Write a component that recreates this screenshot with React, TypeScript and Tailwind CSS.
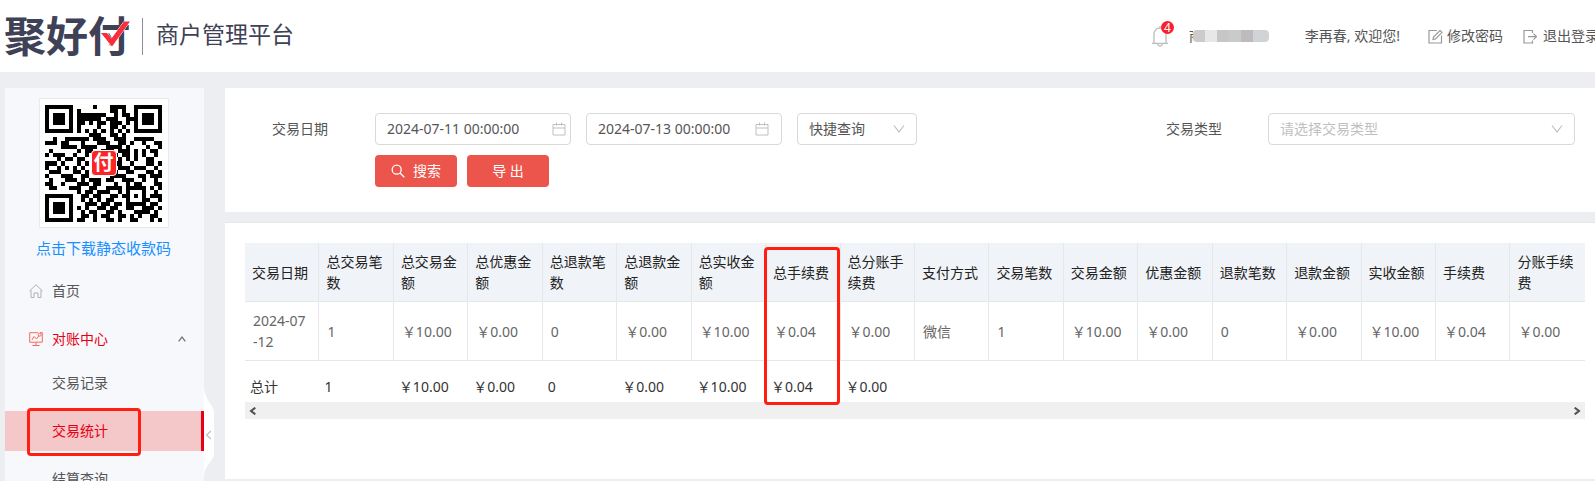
import { useState } from 'react';

const QR_ROWS = [
    '11111110000010001111001111111',
    '10000010100000001101001000001',
    '10111010111111100101101011101',
    '10111010111111011100111011101',
    '10111010110101101110101011101',
    '10000010100001001101001000001',
    '11111110101010101010101111111',
    '00000000000111001101000000000',
    '00100111111011100111001111100',
    '11101100010001110011010010011',
    '00001111011110011110100001001',
    '01000000101100111011101010110',
    '10111001001000001101101010010',
    '00010110110000000010101001100',
    '11101000101000000110010001101',
    '10010101010000000011101110010',
    '01110001101000000100110001101',
    '10001110011000001111000110111',
    '01000111010111011001110010010',
    '11001000111011000100101100011',
    '01100011100110011110111110101',
    '00000000101101110010100010010',
    '11111110011011001101101010111',
    '10000010010101011000100011001',
    '10111010001110110110111110110',
    '10111010101001101100110011101',
    '10111010010110011010001111010',
    '10000010011010110011010100110',
    '11111110110010011010011000101',
];

// full-width yen sign
const yuan = (amount: string) => `\uFFE5${amount}`;

const COLUMNS = [
    { title: '交易日期', value: '2024-07\n-12', total: '总计' },
    { title: '总交易笔数', value: '1', total: '1' },
    { title: '总交易金额', value: yuan('10.00'), total: yuan('10.00') },
    { title: '总优惠金额', value: yuan('0.00'), total: yuan('0.00') },
    { title: '总退款笔数', value: '0', total: '0' },
    { title: '总退款金额', value: yuan('0.00'), total: yuan('0.00') },
    { title: '总实收金额', value: yuan('10.00'), total: yuan('10.00') },
    { title: '总手续费', value: yuan('0.04'), total: yuan('0.04') },
    { title: '总分账手续费', value: yuan('0.00'), total: yuan('0.00') },
    { title: '支付方式', value: '微信', total: '' },
    { title: '交易笔数', value: '1', total: '' },
    { title: '交易金额', value: yuan('10.00'), total: '' },
    { title: '优惠金额', value: yuan('0.00'), total: '' },
    { title: '退款笔数', value: '0', total: '' },
    { title: '退款金额', value: yuan('0.00'), total: '' },
    { title: '实收金额', value: yuan('10.00'), total: '' },
    { title: '手续费', value: yuan('0.04'), total: '' },
    { title: '分账手续费', value: yuan('0.00'), total: '' },
];

const Chevron = ({ className }: { className: string }) => (
    <svg viewBox="0 0 12 12" className={className} fill="none" stroke="currentColor" strokeWidth="1.2">
        <path d="M1 2.5 6 9l5-6.5" />
    </svg>
);

const CalendarIcon = () => (
    <svg viewBox="0 0 14 14" className="size-3.5 shrink-0 text-[#bfbfbf]" fill="none" stroke="currentColor">
        <path d="M1 2.5h12v10.5H1zM1 6h12M4.5 .5v3M9.5 .5v3" />
    </svg>
);

const QrCode = () => (
    <svg viewBox="0 0 29 29" className="size-[117px]" shapeRendering="crispEdges" role="img" aria-label="静态收款码">
        {QR_ROWS.map((row, y) =>
            row.split('').map((cell, x) => cell === '1' && <rect key={`${x}-${y}`} x={x} y={y} width="1" height="1" />)
        )}
    </svg>
);

const Header = () => (
    <header className="flex h-[72px] shrink-0 items-center bg-white pl-1 whitespace-nowrap">
        <div className="relative text-[42px] leading-[42px] font-bold text-[#3f4156]">
            聚好付
            <svg viewBox="0 0 30 26" className="absolute right-0 top-1.5 h-[26px] w-[30px]">
                <path d="M1 12h6l4.500 5.500L24 .5h6L12 25.500z" fill="#fb2c3b" stroke="#fff" strokeWidth="1" paintOrder="stroke" />
            </svg>
        </div>
        <div className="ml-3 h-[37px] w-px bg-[#8c8d99]" />
        <h1 className="ml-[13px] pb-1 text-[23px] leading-8 text-[#3f4156]">商户管理平台</h1>
        <div className="-mr-1 ml-auto flex items-center text-[#555]">
            <button className="relative mr-5" aria-label="消息">
                <svg viewBox="0 0 18 22" className="h-[22px] w-[18px]" fill="none" stroke="#bdbdbd" strokeWidth="1.3">
                    <path d="M1 18.300h16M3 18V9.500C3 5.500 5.500 3 9 3s6 2.500 6 6.500V18M6.500 19c.4 1.500 1.300 2 2.500 2s2.100-.5 2.500-2M9 3V1" />
                </svg>
                <span className="absolute -top-1 left-2.5 size-[13px] rounded-full bg-[#fb1e2c] text-center text-xs leading-[13px] text-white">4</span>
            </button>
            <div className="mr-9 flex items-center">
                <span className="w-1 overflow-hidden">商</span>
                <span className="flex h-3 overflow-hidden rounded-sm">
                    <i className="w-3 bg-[#cccaca]" />
                    <i className="w-3 bg-[#e6e7e9]" />
                    <i className="w-3 bg-[#c8c6c5]" />
                    <i className="w-3 bg-[#c9cacb]" />
                    <i className="w-3 bg-[#bdbbbc]" />
                    <i className="w-4 bg-[#d1d4d7]" />
                </span>
            </div>
            <span className="mr-7">李再春, 欢迎您!</span>
            <a href="#password" className="mr-5 flex items-center gap-1">
                <svg viewBox="0 0 15 15" className="size-[15px]" fill="none" stroke="#999" strokeWidth="1.2">
                    <path d="M9 1.500H1v12.500h12.500V6.500M5 10.500l.5-2.500L12 1.500 14 3.300 7.500 10zM5 10.500 7.500 10" />
                </svg>
                修改密码
            </a>
            <a href="#logout" className="flex items-center gap-1.5">
                <svg viewBox="0 0 14 15" className="h-[15px] w-3.5" fill="none" stroke="#999" strokeWidth="1.2">
                    <path d="M9.500 4V1.500H1V14h8.500v-2.500M5 7.700h8M10.500 4.700l3 3-3 3" />
                </svg>
                退出登录
            </a>
        </div>
    </header>
);

const Sidebar = ({ active, onSelect }: { active: string; onSelect: (name: string) => void }) => (
    <aside className="relative ml-[5px] mt-4 w-[199px] shrink-0 bg-[#f7f8fc] text-[#555]">
        <div className="flex flex-col items-center pt-2.5 pr-0.5">
            <div className="relative flex size-[130px] items-center justify-center border border-[#e8eaee] bg-white">
                <QrCode />
                <span className="absolute flex size-[26px] items-center justify-center rounded border border-white bg-[#fb2526] text-[20px] leading-none font-bold text-white">付</span>
            </div>
            <a href="#qrcode" className="mt-2 text-[15px] leading-6 text-[#1890ff]">点击下载静态收款码</a>
        </div>
        <nav className="mt-[7px]">
            <a href="#home" className="flex h-12 items-center gap-[9px] pl-6">
                <svg viewBox="0 0 14 14" className="size-3.5" fill="none" stroke="#b0b1b5">
                    <path d="M.5 7 7 .8 13.500 7M2 6v7.500h3V9h4v4.500h3V6" />
                </svg>
                首页
            </a>
            <button className="flex h-12 w-full items-center gap-[9px] pl-6 pr-[18px] text-[#e60012]">
                <svg viewBox="0 0 14 14" className="size-3.5" fill="none" stroke="#f5695c">
                    <path d="M9 .7H.7v9.500h12.600V6M7 10.500v3M3.500 13.500h7M3 8l2-3.500L7.500 7 10 3.500M13.300 6V.7H11" />
                    <circle cx="10.700" cy="2.700" r="1.500" />
                </svg>
                对账中心
                <Chevron className="ml-auto size-2 rotate-180 stroke-2 text-[#777]" />
            </button>
            <div className="flex flex-col gap-2">
                {['交易记录', '交易统计', '结算查询'].map(name => (
                    <a
                        key={name}
                        href="#report"
                        onClick={() => onSelect(name)}
                        className={`relative flex h-10 items-center pl-[47px] ${active === name ? 'border-r-3 border-[#e60012] bg-[#f4c7c9] text-[#e60012]' : ''}`}
                    >
                        {name}
                        {name === '交易统计' && <span className="absolute -top-[3px] left-[22px] h-12 w-[114px] rounded-sm border-3 border-[#ff1e10]" />}
                    </a>
                ))}
            </div>
        </nav>
        <button className="absolute left-full top-[300px] h-[88px] w-2.5" aria-label="收起菜单">
            <svg viewBox="0 0 10 88" className="h-[88px] w-2.5">
                <path d="M0 0C2 14 9 16 10 24v42c-1 8-8 9-10 22z" fill="#fff" />
                <path d="M7 43 2.500 47 7 51" fill="none" stroke="#b8c0cc" strokeWidth="1.200" />
            </svg>
        </button>
    </aside>
);

const DateField = ({ label, value, className }: { label: string; value: string; className: string }) => (
    <div className={`flex h-8 w-[196px] items-center rounded border border-[#d9d9d9] pl-[11px] ${className}`}>
        <input type="text" aria-label={label} defaultValue={value} className="w-full min-w-0 outline-none" />
        <CalendarIcon />
    </div>
);

const SearchForm = () => (
    <form className="flex h-[124px] shrink-0 bg-white pl-[47px] pr-5 pt-[25px] text-[#555]" onSubmit={e => e.preventDefault()}>
        <span className="w-[103px] shrink-0 leading-8">交易日期</span>
        <div className="flex flex-col gap-2.5">
            <div className="flex gap-[15px]">
                <DateField label="开始时间" value="2024-07-11 00:00:00" className="pr-1" />
                <DateField label="结束时间" value="2024-07-13 00:00:00" className="pr-3" />
                <div className="relative w-[120px]">
                    <select aria-label="快捷查询" className="h-8 w-full appearance-none rounded border border-[#d9d9d9] bg-white px-[11px]">
                        <option>快捷查询</option>
                    </select>
                    <Chevron className="pointer-events-none absolute right-3 top-2.5 size-3 text-[#bfbfbf]" />
                </div>
            </div>
            <div className="flex gap-2.5">
                <button className="flex h-8 w-[82px] items-center justify-center gap-2 rounded-sm bg-[#ec554b] text-white">
                    <svg viewBox="0 0 14 14" className="size-3.5" fill="none" stroke="currentColor" strokeWidth="1.3">
                        <circle cx="5.700" cy="5.700" r="4.500" />
                        <path d="m9 9 4.300 4.300" />
                    </svg>
                    搜索
                </button>
                <button className="h-8 w-[82px] rounded-sm bg-[#ec554b] text-white">导 出</button>
            </div>
        </div>
        <label htmlFor="trade-type" className="ml-auto w-[102px] shrink-0 leading-8">交易类型</label>
        <div className="relative w-[307px]">
            <select id="trade-type" className="h-8 w-full appearance-none rounded border border-[#d9d9d9] bg-white px-[11px] text-[#bfbfbf]">
                <option>请选择交易类型</option>
            </select>
            <Chevron className="pointer-events-none absolute right-3 top-2.5 size-3 text-[#bfbfbf]" />
        </div>
    </form>
);

const StatTable = () => (
    <section className="h-[257px] shrink-0 border-t border-[#e6e7ea] bg-white pl-5 pr-2.5 pt-5">
        <div className="relative">
            <table className="w-full table-fixed border-separate border-spacing-0 text-left leading-[21px]">
                <thead className="bg-[#f0f3f7] text-[#222]">
                    <tr className="h-[59px]">
                        {COLUMNS.map(col => (
                            <th key={col.title} className="border-b border-r border-[#e6e7e9] pl-[7px] font-normal last:border-r-0">{col.title}</th>
                        ))}
                    </tr>
                </thead>
                <tbody className="text-[#666]">
                    <tr className="h-[59px]">
                        {COLUMNS.map(col => (
                            <td key={col.title} className="border-b border-r border-[#e6e7e9] pl-2 whitespace-pre-line last:border-r-0">{col.value}</td>
                        ))}
                    </tr>
                </tbody>
                <tfoot className="text-[#333]">
                    <tr className="h-[41px]">
                        {COLUMNS.map(col => (
                            <td key={col.title} className="pl-[5px] pt-2.5">{col.total}</td>
                        ))}
                    </tr>
                </tfoot>
            </table>
            <div className="flex h-[17px] items-center justify-between bg-[#f0f0f0] px-1 text-[#505050]">
                <button aria-label="向左滚动"><Chevron className="size-2 rotate-90 stroke-3" /></button>
                <button aria-label="向右滚动"><Chevron className="size-2 -rotate-90 stroke-3" /></button>
            </div>
            <div className="absolute left-[38.7%] top-1 h-[158px] w-[76px] rounded-sm border-3 border-[#ff1e10]" />
        </div>
    </section>
);

const App: React.FC = () => {
    const [active, setActive] = useState('交易统计');

    return (
        <div className="flex h-screen flex-col overflow-hidden bg-[#edeef2] font-['Noto_Sans','Noto_Sans_CJK_SC',sans-serif] text-sm">
            <Header />
            <div className="flex min-h-0 flex-1">
                <Sidebar active={active} onSelect={setActive} />
                <main className="ml-[21px] mt-4 flex min-w-0 flex-1 flex-col gap-2.5">
                    <SearchForm />
                    <StatTable />
                </main>
            </div>
        </div>
    );
};

export default App;
